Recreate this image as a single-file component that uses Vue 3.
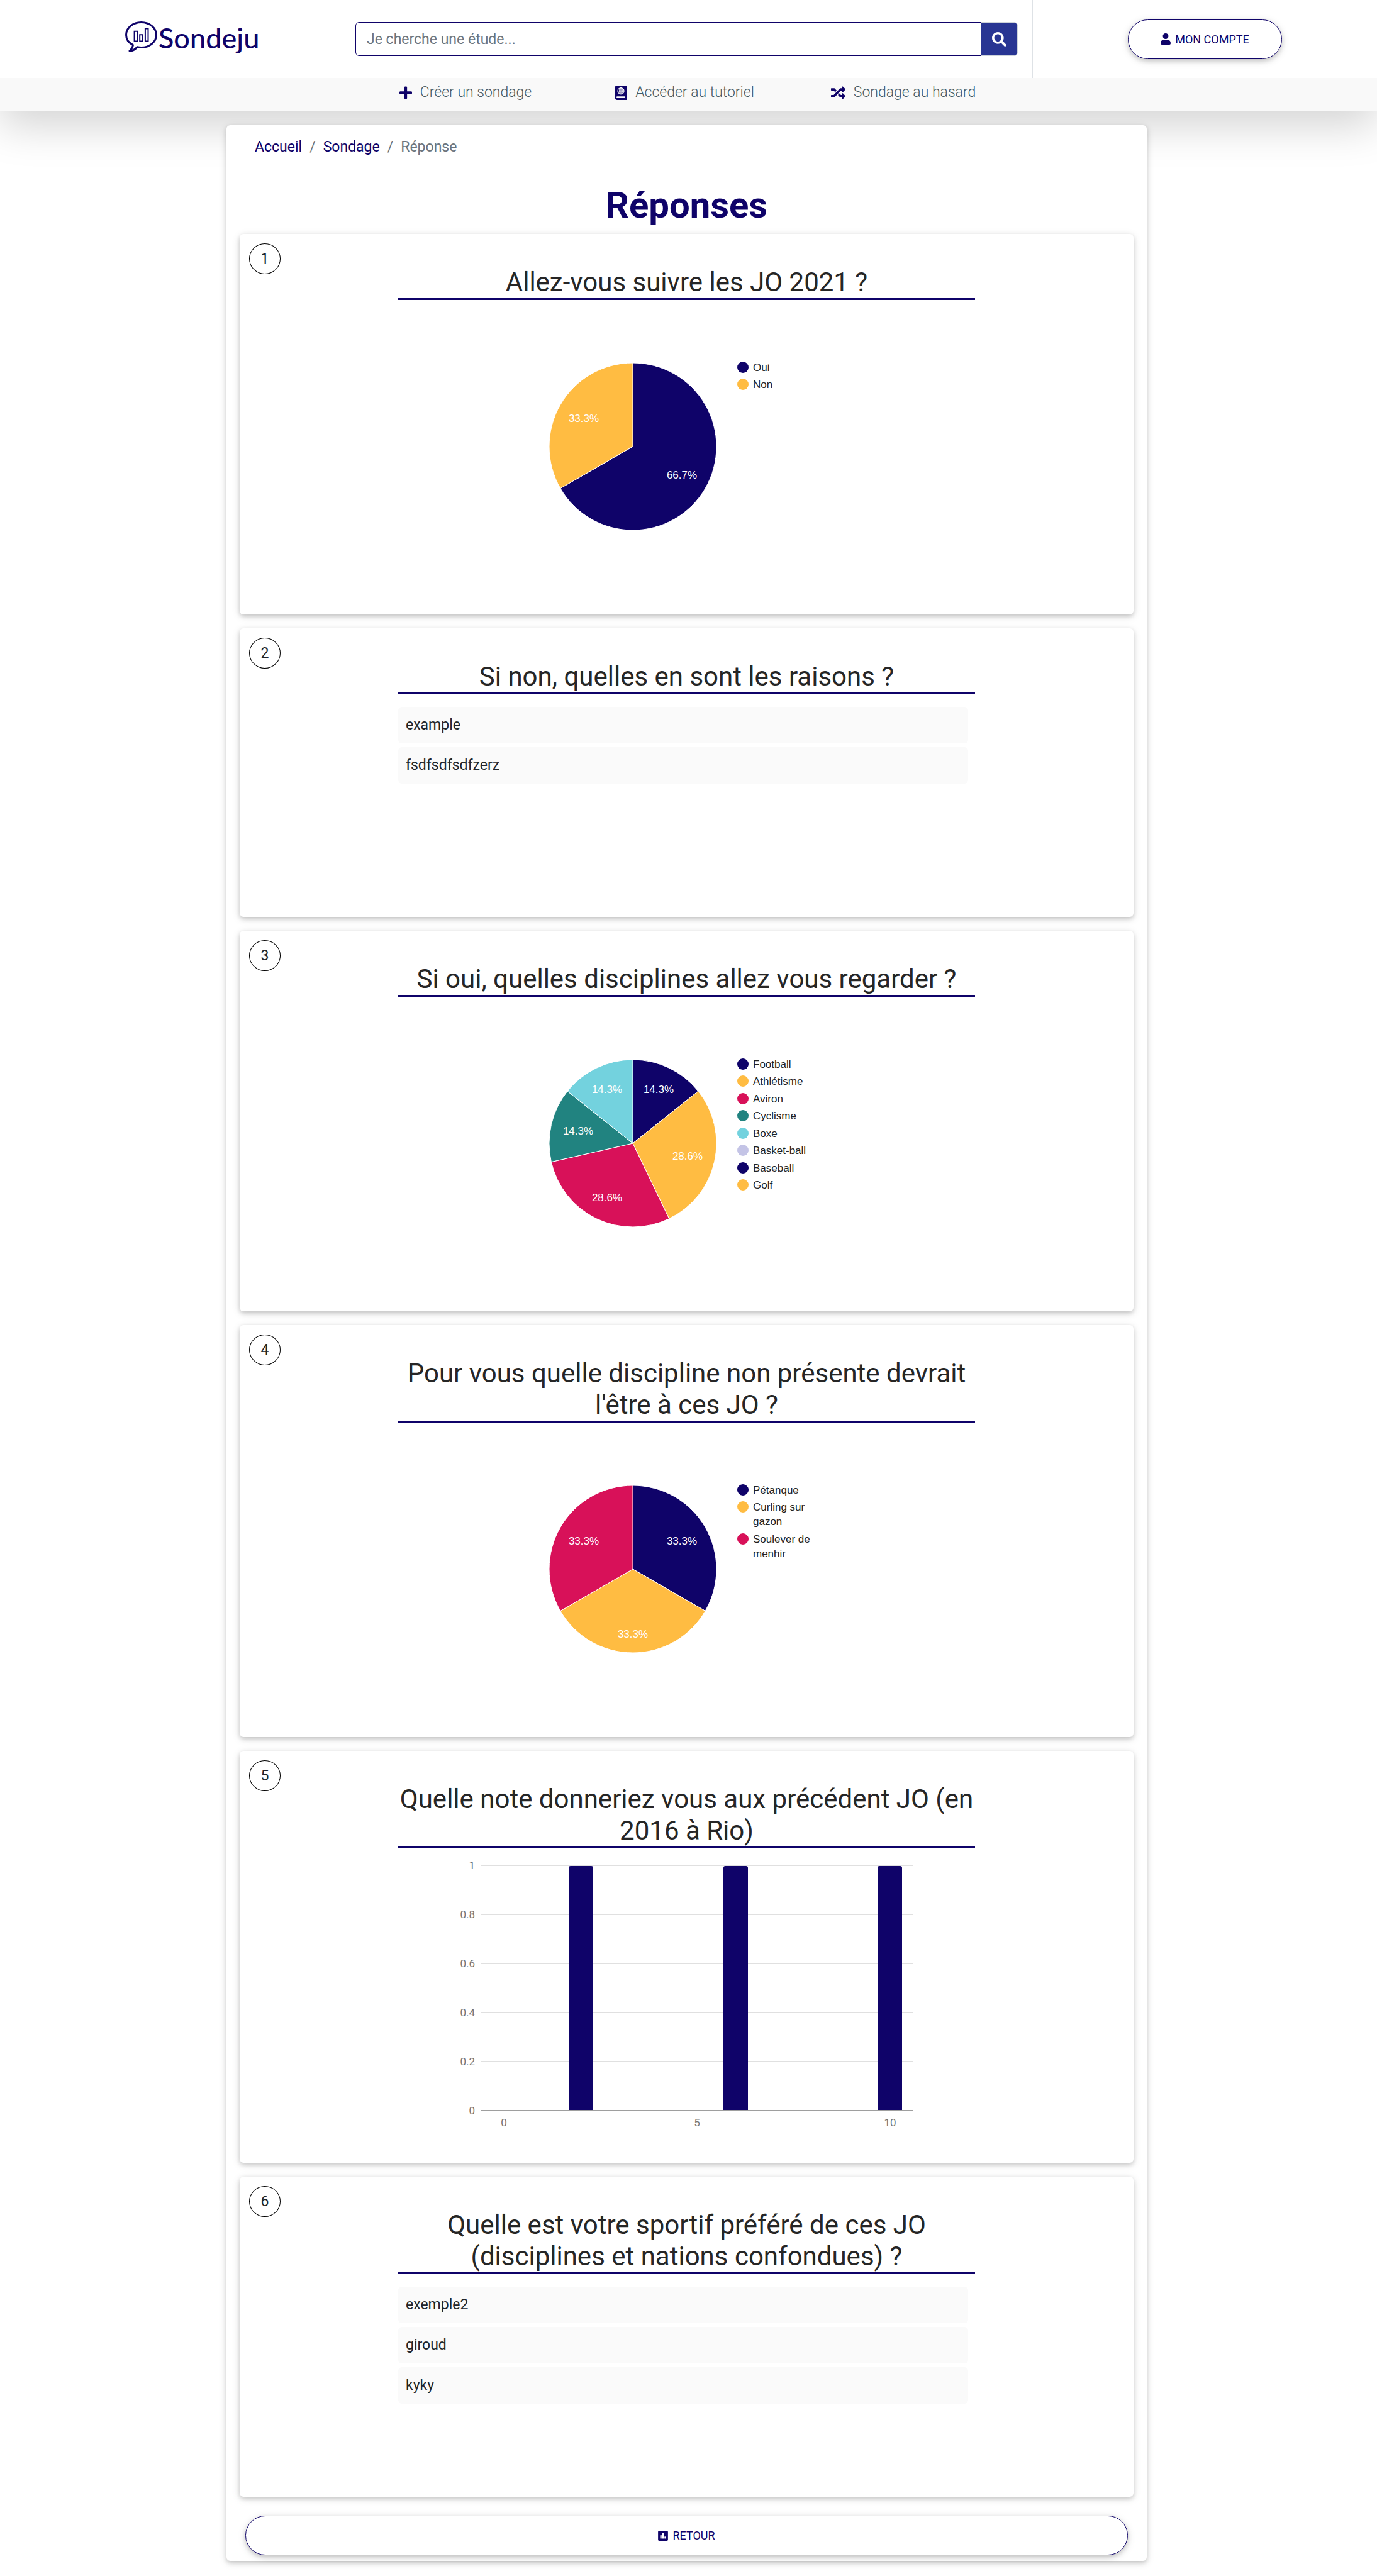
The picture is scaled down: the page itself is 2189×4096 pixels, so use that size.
<script setup>
const NAVY = '#0f0369'
const ORANGE = '#ffbc42'
const PINK = '#d81159'
const TEAL = '#218380'
const CYAN = '#73d2de'
const LILAC = '#c4c4e6'

const icons = {
  plus: { w: 448, d: 'M416 208H272V64c0-17.67-14.33-32-32-32h-32c-17.67 0-32 14.33-32 32v144H32c-17.67 0-32 14.33-32 32v32c0 17.67 14.33 32 32 32h144v144c0 17.67 14.33 32 32 32h32c17.67 0 32-14.33 32-32V304h144c17.67 0 32-14.33 32-32v-32c0-17.67-14.33-32-32-32z' },
  random: { w: 512, d: 'M504.971 359.029c9.373 9.373 9.373 24.569 0 33.941l-80 79.984c-15.01 15.01-40.971 4.49-40.971-16.971V416h-58.785a12.004 12.004 0 0 1-8.773-3.812l-70.556-75.596 53.333-57.143L352 336h32v-39.981c0-21.438 25.943-31.998 40.971-16.971l80 79.981zM12 176h84l52.781 56.551 53.333-57.143-70.556-75.596A11.999 11.999 0 0 0 122.785 96H12c-6.627 0-12 5.373-12 12v56c0 6.627 5.373 12 12 12zm372 0v39.984c0 21.46 25.961 31.98 40.971 16.971l80-79.984c9.373-9.373 9.373-24.569 0-33.941l-80-79.981C409.943 24.021 384 34.582 384 56.019V96h-58.785a12.004 12.004 0 0 0-8.773 3.812L96 336H12c-6.627 0-12 5.373-12 12v56c0 6.627 5.373 12 12 12h110.785c3.326 0 6.503-1.381 8.773-3.812L352 176h32z' },
}

/* Each slice: share of the answers, colour. Labels sit as far out as their box allows. */
const RADIUS = 133
const LABEL_REACH = 115
const HALF_W = 24
const HALF_H = 9
const CX = 373
const CY = 233

function pie(slices) {
  const total = slices.reduce((sum, s) => sum + s.value, 0)
  let start = 0
  return slices.filter((s) => s.value > 0).map((s) => {
    const end = start + (s.value / total) * Math.PI * 2
    const mid = (start + end) / 2
    const large = end - start > Math.PI ? 1 : 0
    const x1 = CX + RADIUS * Math.sin(start)
    const y1 = CY - RADIUS * Math.cos(start)
    const x2 = CX + RADIUS * Math.sin(end)
    const y2 = CY - RADIUS * Math.cos(end)
    const b = HALF_W * Math.abs(Math.sin(mid)) + HALF_H * Math.abs(Math.cos(mid))
    const c = HALF_W ** 2 + HALF_H ** 2 - LABEL_REACH ** 2
    const dist = -b + Math.sqrt(b * b - c)
    start = end
    return {
      d: `M${CX} ${CY}L${x1} ${y1}A${RADIUS} ${RADIUS} 0 ${large} 1 ${x2} ${y2}Z`,
      color: s.color,
      x: Math.round(CX + dist * Math.sin(mid)),
      y: Math.round(CY - dist * Math.cos(mid)) + 6,
      label: ((s.value / total) * 100).toFixed(1) + '%',
    }
  })
}

function legend(slices) {
  let y = CY - 126
  return slices.map((s) => {
    const row = { lines: s.lines, color: s.color, y: Math.round(y) }
    y += 27.45 + (s.lines.length - 1) * 23
    return row
  })
}

function pieQuestion(title, slices) {
  return { title, type: 'pie', slices: pie(slices), legend: legend(slices) }
}

const questions = [
  pieQuestion('Allez-vous suivre les JO 2021 ?', [
    { lines: ['Oui'], value: 2, color: NAVY },
    { lines: ['Non'], value: 1, color: ORANGE },
  ]),
  { title: 'Si non, quelles en sont les raisons ?', type: 'list', answers: ['example', 'fsdfsdfsdfzerz'] },
  pieQuestion('Si oui, quelles disciplines allez vous regarder ?', [
    { lines: ['Football'], value: 1, color: NAVY },
    { lines: ['Athlétisme'], value: 2, color: ORANGE },
    { lines: ['Aviron'], value: 2, color: PINK },
    { lines: ['Cyclisme'], value: 1, color: TEAL },
    { lines: ['Boxe'], value: 1, color: CYAN },
    { lines: ['Basket-ball'], value: 0, color: LILAC },
    { lines: ['Baseball'], value: 0, color: NAVY },
    { lines: ['Golf'], value: 0, color: ORANGE },
  ]),
  pieQuestion("Pour vous quelle discipline non présente devrait l'être à ces JO ?", [
    { lines: ['Pétanque'], value: 1, color: NAVY },
    { lines: ['Curling sur', 'gazon'], value: 1, color: ORANGE },
    { lines: ['Soulever de', 'menhir'], value: 1, color: PINK },
  ]),
  { title: 'Quelle note donneriez vous aux précédent JO (en 2016 à Rio)', type: 'bars' },
  {
    title: 'Quelle est votre sportif préféré de ces JO (disciplines et nations confondues) ?',
    type: 'list',
    answers: ['exemple2', 'giroud', 'kyky'],
  },
]

const yTicks = ['1', '0.8', '0.6', '0.4', '0.2', '0'].map((label, i) => ({ label, y: 27 + i * 78 }))
const xTicks = [{ label: '0', x: 168 }, { label: '5', x: 475 }, { label: '10', x: 782 }]
const bars = [271, 517, 762]
</script>

<template>
  <div class="page">
    <header class="site-header">
      <div class="top-bar">
        <a class="logo" href="#" aria-label="Sondeju">
          <svg class="bubble" width="52" height="49" viewBox="0 0 52 49" fill="none" stroke="currentColor">
            <path stroke-width="3" stroke-linejoin="round" d="M12.500 37.500C5.500 34 1.500 28.500 1.500 21.500C1.500 10.500 12 1.500 25.500 1.500S49.500 10.500 49.500 21.500S39 41.500 25.500 41.500C23 41.500 21 41.200 19 40.700C16 44.500 12.500 47 7 47C10 44.500 11.700 41.500 12.500 37.500Z" />
            <path stroke-width="2" d="M14.600 15.800h4.600v15.600h-4.600zM23.200 21.200h4.600v10.200h-4.600zM31.900 11.600h4.600v19.800h-4.600z" />
          </svg>
          <span class="wordmark">Sondeju</span>
        </a>
        <form class="search" @submit.prevent>
          <input type="text" placeholder="Je cherche une étude..." aria-label="Rechercher une étude" />
          <button type="submit" aria-label="Rechercher">
            <svg width="23" height="23" viewBox="0 0 512 512" fill="currentColor">
              <path d="M505 442.700L405.300 343c-4.500-4.500-10.600-7-17-7H372c27.600-35.300 44-79.700 44-128C416 93.100 322.900 0 208 0S0 93.100 0 208s93.100 208 208 208c48.300 0 92.700-16.400 128-44v16.300c0 6.400 2.500 12.500 7 17l99.700 99.700c9.400 9.400 24.600 9.400 33.900 0l28.300-28.300c9.400-9.400 9.400-24.600.1-34zM208 336c-70.700 0-128-57.200-128-128 0-70.700 57.200-128 128-128 70.700 0 128 57.200 128 128 0 70.700-57.200 128-128 128z" />
            </svg>
          </button>
        </form>
        <div class="account">
          <button type="button" class="pill">
            <svg width="16" height="18" viewBox="0 0 448 512" fill="currentColor">
              <path d="M224 256c70.700 0 128-57.300 128-128S294.700 0 224 0 96 57.300 96 128s57.300 128 128 128zm89.600 32h-16.700c-22.200 10.200-46.900 16-72.900 16s-50.600-5.800-72.900-16h-16.700C60.200 288 0 348.200 0 422.400V464c0 26.500 21.500 48 48 48h352c26.500 0 48-21.500 48-48v-41.600c0-74.200-60.200-134.400-134.400-134.400z" />
            </svg>
            MON COMPTE
          </button>
        </div>
      </div>
      <nav class="sub-nav">
        <a href="#">
          <svg width="20" height="23" :viewBox="`0 0 ${icons.plus.w} 512`"><path :d="icons.plus.d" /></svg>
          Créer un sondage
        </a>
        <a href="#">
          <svg width="20" height="23" viewBox="0 0 448 512">
            <path fill-rule="evenodd" d="M448 358.400V25.600c0-16-9.600-25.600-25.600-25.600H96C41.600 0 0 41.600 0 96v320c0 54.400 41.600 96 96 96h326.400c12.800 0 25.600-9.600 25.600-25.600v-16c0-6.400-3.200-12.800-9.600-19.200-3.200-16-3.200-60.800 0-73.600 6.400-3.200 9.600-9.600 9.600-19.200zM380 448H96c-19 0-32-12.800-32-32s16-32 32-32h284z" />
            <g fill="none" stroke="#f9f9f9" stroke-width="28">
              <circle cx="224" cy="192" r="112" />
              <ellipse cx="224" cy="192" rx="50" ry="112" />
              <path d="M112 192h224M224 80v224" />
            </g>
          </svg>
          Accéder au tutoriel
        </a>
        <a href="#">
          <svg width="23" height="23" :viewBox="`0 0 ${icons.random.w} 512`"><path :d="icons.random.d" /></svg>
          Sondage au hasard
        </a>
      </nav>
    </header>

    <main class="layout">
      <div class="panel">
        <nav aria-label="Fil d'Ariane">
          <ol class="breadcrumb">
            <li><a href="#">Accueil</a></li>
            <li aria-hidden="true">/</li>
            <li><a href="#">Sondage</a></li>
            <li aria-hidden="true">/</li>
            <li aria-current="page">Réponse</li>
          </ol>
        </nav>
        <h1>Réponses</h1>

        <div class="cards">
          <section v-for="(q, i) in questions" :key="i" class="card">
            <span class="number">{{ i + 1 }}</span>
            <div class="content">
              <h2>{{ q.title }}</h2>

              <div v-if="q.type === 'pie'" class="chart">
                <svg width="917" height="465" viewBox="0 0 917 465" role="img" :aria-label="q.title">
                  <path v-for="(s, k) in q.slices" :key="k" :d="s.d" :fill="s.color" stroke="#fff" stroke-width="1" />
                  <text v-for="(s, k) in q.slices" :key="'t' + k" class="slice-label" :x="s.x" :y="s.y">{{ s.label }}</text>
                  <g v-for="(row, k) in q.legend" :key="'l' + k">
                    <circle cx="548" :cy="row.y" r="9" :fill="row.color" />
                    <text v-for="(line, n) in row.lines" :key="n" class="legend-label" x="564" :y="row.y + 6 + n * 23">{{ line }}</text>
                  </g>
                </svg>
              </div>

              <div v-else-if="q.type === 'bars'" class="chart">
                <svg width="917" height="465" viewBox="0 0 917 465" role="img" :aria-label="q.title">
                  <path
                    v-for="t in yTicks" :key="t.label" :d="`M131 ${t.y}H819`"
                    :stroke="t.label === '0' ? '#9e9e9e' : '#e0e0e0'" stroke-width="2"
                  />
                  <path v-for="x in bars" :key="x" :fill="NAVY" :d="`M${x} 416V31q0-3 3-3h33q3 0 3 3V416z`" />
                  <text v-for="t in yTicks" :key="'y' + t.label" class="tick end" x="122" :y="t.y + 6">{{ t.label }}</text>
                  <text v-for="t in xTicks" :key="'x' + t.label" class="tick" :x="t.x" y="442">{{ t.label }}</text>
                </svg>
              </div>

              <ul v-else class="answers">
                <li v-for="a in q.answers" :key="a">{{ a }}</li>
              </ul>
            </div>
          </section>
        </div>

        <button type="button" class="pill back">
          <svg width="16" height="18" viewBox="0 0 448 512" fill="currentColor">
            <path d="M400 32H48C21.500 32 0 53.500 0 80v352c0 26.500 21.500 48 48 48h352c26.500 0 48-21.500 48-48V80c0-26.500-21.500-48-48-48zM160 368c0 8.840-7.160 16-16 16h-32c-8.840 0-16-7.160-16-16V240c0-8.840 7.160-16 16-16h32c8.840 0 16 7.160 16 16v128zm96 0c0 8.840-7.160 16-16 16h-32c-8.840 0-16-7.160-16-16V144c0-8.840 7.160-16 16-16h32c8.840 0 16 7.160 16 16v224zm96 0c0 8.840-7.160 16-16 16h-32c-8.840 0-16-7.160-16-16v-64c0-8.840 7.160-16 16-16h32c8.840 0 16 7.160 16 16v64z" />
          </svg>
          RETOUR
        </button>
      </div>
    </main>
  </div>
</template>

<style>
body {
  margin: 0;
  background: #fff;
}
</style>

<style scoped>
.page {
  --navy: #0f0369;
  --shadow: 0 3px 7px rgba(0, 0, 0, 0.16), 0 3px 14px rgba(0, 0, 0, 0.12);
  font-family: Roboto, sans-serif;
  font-size: 23px;
  line-height: 34px;
  color: #212529;
}
.page *,
.page *::before {
  box-sizing: border-box;
}
a {
  text-decoration: none;
}

.site-header {
  background: #fff;
  box-shadow: 0 23px 68px rgba(0, 0, 0, 0.175);
}
.top-bar {
  display: grid;
  grid-template-columns: 565fr 1077fr 547fr;
  height: 124px;
}
.logo {
  display: flex;
  align-items: flex-start;
  gap: 1px;
  padding: 34px 0 0 199px;
  color: var(--navy);
}
.bubble {
  flex: none;
}
.wordmark {
  font-family: Lato, sans-serif;
  font-size: 45px;
  font-weight: 500;
  line-height: 52px;
}
.search {
  display: flex;
  align-items: center;
  padding-right: 23px;
  border-right: 1px solid #dee2e6;
}
.search input {
  flex: 1;
  min-width: 0;
  height: 54px;
  padding: 0 17px;
  border: 1px solid var(--navy);
  border-radius: 6px 0 0 6px;
  background: #fff;
  font: inherit;
  color: #495057;
}
.search input::placeholder {
  color: #6c757d;
  opacity: 1;
}
.search button {
  display: flex;
  align-items: center;
  justify-content: center;
  width: 58px;
  height: 54px;
  padding: 0;
  border: 1px solid #ced4da;
  border-left: 0;
  border-radius: 0 6px 6px 0;
  background: #283593;
  color: #fff;
}
.account {
  display: flex;
  align-items: center;
  justify-content: center;
}
.pill {
  display: flex;
  align-items: center;
  justify-content: center;
  gap: 7px;
  height: 63px;
  padding: 0 51px;
  border: 1px solid var(--navy);
  border-radius: 32px;
  background: #fff;
  box-shadow: var(--shadow);
  font-family: inherit;
  font-size: 18px;
  line-height: 27px;
  color: var(--navy);
}
.sub-nav {
  display: grid;
  grid-template-columns: repeat(3, 348px);
  height: 52px;
  padding-left: 566px;
  background: #f9f9f9;
}
.sub-nav a {
  display: flex;
  align-items: center;
  justify-content: center;
  gap: 13px;
  padding-bottom: 6px;
  font-weight: 300;
  color: #455a64;
}
.sub-nav svg {
  fill: var(--navy);
}

.layout {
  display: grid;
  grid-template-columns: 360fr 1463fr 366fr;
  padding: 23px 0 24px;
}
.panel {
  grid-column: 2;
  padding: 18px 21px 9px;
  border-radius: 6px;
  background: #fff;
  box-shadow: var(--shadow);
}
.breadcrumb {
  display: flex;
  gap: 12px;
  margin: 0 0 41px;
  padding: 0 24px;
  list-style: none;
  color: #6c757d;
}
.breadcrumb a {
  color: var(--navy);
}
h1 {
  margin: 0 0 12px;
  font-size: 58px;
  font-weight: 700;
  line-height: 68px;
  text-align: center;
  color: var(--navy);
}
.cards {
  display: flex;
  flex-direction: column;
  gap: 22px;
}
.card {
  position: relative;
  padding-top: 52px;
  border-radius: 6px;
  background: #fff;
  box-shadow: var(--shadow);
}
.number {
  position: absolute;
  top: 15px;
  left: 15px;
  width: 50px;
  height: 49px;
  border: 1px solid #000;
  border-radius: 50%;
  line-height: 47px;
  text-align: center;
}
.content {
  width: 917px;
  max-width: 100%;
  margin: 0 auto;
}
h2 {
  margin: 0;
  border-bottom: 3px solid var(--navy);
  font-size: 42px;
  font-weight: 400;
  line-height: 50px;
  text-align: center;
  color: #262626;
}
.chart {
  padding-bottom: 35px;
}
.chart svg {
  display: block;
}
.slice-label,
.legend-label {
  font-family: "Liberation Sans", Arial, sans-serif;
  font-size: 17px;
}
.slice-label {
  fill: #fff;
  text-anchor: middle;
}
.legend-label {
  fill: #222;
}
.tick {
  font-size: 17px;
  fill: #757575;
  text-anchor: middle;
}
.tick.end {
  text-anchor: end;
}
.answers {
  display: flex;
  flex-direction: column;
  gap: 6px;
  min-height: 354px;
  margin: 0;
  padding: 20px 11px 0 0;
  list-style: none;
}
.answers li {
  padding: 12px;
  border-radius: 6px;
  background: #fafafa;
}
.back {
  width: calc(100% - 18px);
  margin: 30px 9px 0;
}
</style>
